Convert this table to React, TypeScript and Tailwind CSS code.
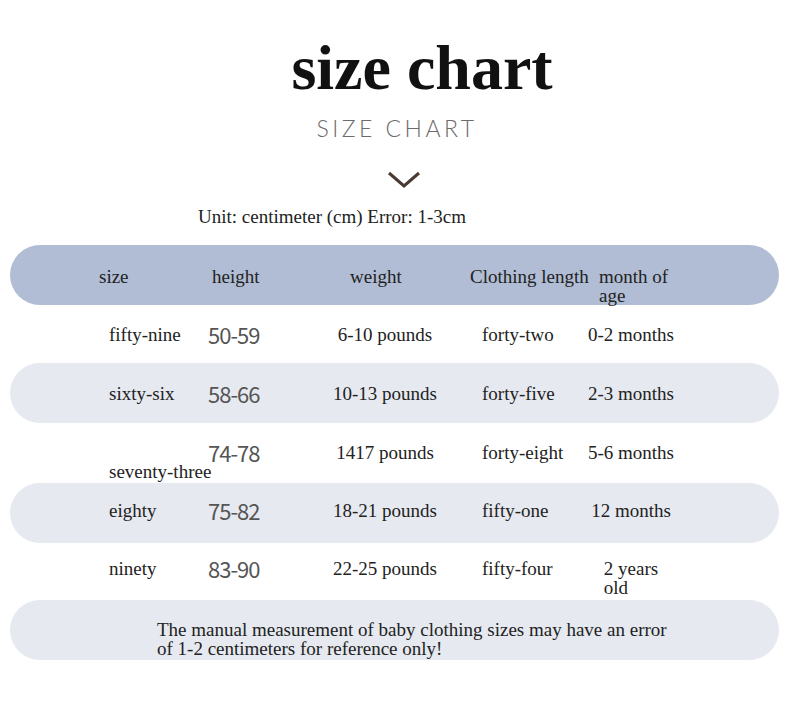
import React from 'react';

type Row = {
  size: string;
  height: string;
  weight: string;
  length: string;
  age: React.ReactNode;
  shaded: boolean;
  boxH: string;
  pad: string;
  sizeDrop?: boolean;
};

const rows: Row[] = [
  { size: 'fifty-nine', height: '50-59', weight: '6-10 pounds', length: 'forty-two', age: '0-2 months', shaded: false, boxH: 'h-[58px]', pad: 'pt-[20px]' },
  { size: 'sixty-six', height: '58-66', weight: '10-13 pounds', length: 'forty-five', age: '2-3 months', shaded: true, boxH: 'h-[60px]', pad: 'pt-[21px]' },
  { size: 'seventy-three', height: '74-78', weight: '1417 pounds', length: 'forty-eight', age: '5-6 months', shaded: false, boxH: 'h-[60px]', pad: 'pt-[20px]', sizeDrop: true },
  { size: 'eighty', height: '75-82', weight: '18-21 pounds', length: 'fifty-one', age: '12 months', shaded: true, boxH: 'h-[60px]', pad: 'pt-[18px]' },
  {
    size: 'ninety',
    height: '83-90',
    weight: '22-25 pounds',
    length: 'fifty-four',
    age: (
      <>
        2 years
        <br />
        old
      </>
    ),
    shaded: false,
    boxH: 'h-[57px]',
    pad: 'pt-[16px]',
  },
];

const serif = "font-['Liberation_Serif','Times_New_Roman',serif]";

const App: React.FC = () => {
  return (
    <div className={`w-[790px] h-[701px] bg-white text-[#222] ${serif}`}>
      {/* Heading */}
      <div className="flex flex-col items-center">
        <h1 className="mt-[36px] pl-[54px] text-[64px] leading-none font-bold text-[#111]">size chart</h1>
        <p className="mt-[17px] pl-[4px] font-['Lato',sans-serif] font-light text-[23px] leading-none tracking-[3.5px] text-[#6b6b6b]">
          SIZE CHART
        </p>
        <svg className="mt-[31px] ml-[18px]" width="34" height="18" viewBox="0 0 34 18">
          <path d="M2 2 L17 15 L32 2" fill="none" stroke="#4b3a31" strokeWidth="3" />
        </svg>
      </div>

      <p className="mt-[18px] pl-[198px] text-[19px] leading-none">Unit: centimeter (cm) Error: 1-3cm</p>

      <div className="mt-[19px] px-[10px] pr-[11px]">
        {/* Header */}
        <div className="h-[60px] rounded-full bg-[#b0bdd4] pl-[89px] pt-[22px] grid grid-cols-[113px_138px_120px_129px_1fr] text-[19px] leading-[19px]">
          <span>size</span>
          <span>height</span>
          <span>weight</span>
          <span>Clothing length</span>
          <span>
            month of
            <br />
            age
          </span>
        </div>

        {/* Rows */}
        {rows.map((r) => (
          <div
            key={r.size}
            className={`${r.boxH} ${r.pad} rounded-full pl-[99px] grid grid-cols-[99px_80px_194px_89px_120px] items-start text-[19px] leading-[19px] ${
              r.shaded ? 'bg-[#e6e9f0]' : 'bg-white'
            }`}
          >
            <span className={`whitespace-nowrap ${r.sizeDrop ? 'pt-[19px]' : ''}`}>{r.size}</span>
            <span className="font-['Noto_Sans_CJK_SC','Noto_Sans',sans-serif] text-[22px] tracking-[-1px] leading-[19px] text-[#555]">
              {r.height}
            </span>
            <span className="text-center">{r.weight}</span>
            <span className="whitespace-nowrap">{r.length}</span>
            <span className="text-center">
              <span className="inline-block text-left">{r.age}</span>
            </span>
          </div>
        ))}

        {/* Note */}
        <div className="h-[60px] rounded-full bg-[#e6e9f0] pl-[147px] pt-[20px] text-[19px] leading-[19px]">
          The manual measurement of baby clothing sizes may have an error
          <br />
          of 1-2 centimeters for reference only!
        </div>
      </div>
    </div>
  );
};

export default App;
